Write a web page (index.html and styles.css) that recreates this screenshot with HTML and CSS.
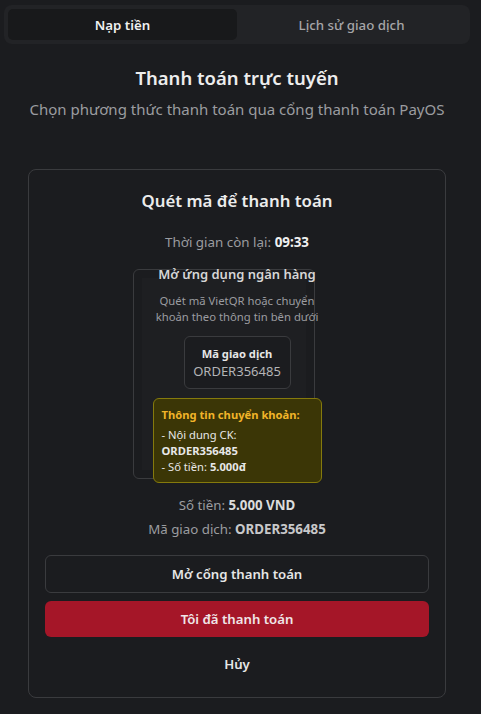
FILE: index.html
```html
<!DOCTYPE html>
<html lang="vi">
<head>
<meta charset="utf-8">
<link rel="stylesheet" href="styles.css">
</head>
<body>
<div class="page">
  <div class="tabs">
    <div class="tab active">Nạp tiền</div>
    <div class="tab">Lịch sử giao dịch</div>
  </div>
  <h1 class="title">Thanh toán trực tuyến</h1>
  <p class="subtitle">Chọn phương thức thanh toán qua cổng thanh toán PayOS</p>

  <div class="card">
    <h2 class="card-title">Quét mã để thanh toán</h2>
    <p class="timer">Thời gian còn lại: <b>09:33</b></p>
    <div class="qr-box">
      <div class="qr-inner">
        <div class="qr-head">Mở ứng dụng ngân hàng</div>
        <p class="qr-desc">Quét mã VietQR hoặc chuyển khoản theo thông tin bên dưới</p>
        <div class="code-box">
          <div class="code-label">Mã giao dịch</div>
          <div class="code-value">ORDER356485</div>
        </div>
        <div class="info-box">
          <div class="info-title">Thông tin chuyển khoản:</div>
          <div>- Nội dung CK:</div>
          <div><b>ORDER356485</b></div>
          <div>- Số tiền: <b>5.000đ</b></div>
        </div>
      </div>
    </div>
    <p class="line amount">Số tiền: <b>5.000 VND</b></p>
    <p class="line">Mã giao dịch: <b>ORDER356485</b></p>
    <div class="actions">
      <button class="btn btn-outline">Mở cổng thanh toán</button>
      <button class="btn btn-red">Tôi đã thanh toán</button>
      <button class="btn btn-ghost">Hủy</button>
    </div>
  </div>
</div>
</body>
</html>
```

FILE: styles.css
```css
* { box-sizing: border-box; }
html, body { margin: 0; padding: 0; }
body {
  background: #1b1c1f;
  color: #e6e6e6;
  font-family: "Noto Sans", "Open Sans", sans-serif;
  width: 481px;
  height: 714px;
  overflow: hidden;
}
.page { padding: 5px 11px 0 4px; }
.tabs {
  display: grid;
  grid-template-columns: 1fr 1fr;
  background: #222326;
  border-radius: 8px;
  padding: 4px;
  height: 39px;
}
.tab {
  display: flex;
  align-items: center;
  justify-content: center;
  font-size: 13.3px;
  color: #a6a6a8;
  font-weight: 500;
  border-radius: 5px;
}
.tab.active { background: #18191b; color: #f0f0f0; font-weight: 600; }
.title {
  margin: 20px 0 0;
  text-align: center;
  font-size: 18.5px;
  font-weight: 600;
  color: #ededed;
  line-height: 28px;
}
.subtitle {
  margin: 6px 0 0;
  text-align: center;
  font-size: 15px;
  color: #9b9ca0;
  line-height: 22px;
}
.card {
  margin: 49px 24px 0 24px;
  border: 1px solid #3a3b3e;
  border-radius: 8px;
  padding: 18px 16px 14px;
  display: flex;
  flex-direction: column;
  align-items: center;
  height: 529px;
}
.card-title {
  margin: 0;
  font-size: 16.8px;
  font-weight: 600;
  line-height: 26px;
  color: #ececec;
}
.timer {
  margin: 18px 0 0;
  font-size: 13.4px;
  line-height: 20px;
  color: #9b9ca0;
}
.timer b { color: #f0f0f0; font-weight: 700; }
.qr-box {
  margin-top: 17px;
  margin-right: 26px;
  width: 182px;
  height: 210px;
  border: 1px solid #3a3b3e;
  border-radius: 6px;
  padding: 8px;
}
.qr-inner {
  height: 100%;
  background: #1e1f22;
  padding-left: 26px;
  display: flex;
  flex-direction: column;
  align-items: center;
}
.qr-head {
  margin-top: -14px;
  font-size: 13px;
  font-weight: 600;
  color: #d6d6d6;
  line-height: 20px;
  white-space: nowrap;
}
.qr-desc {
  margin: 9px 0 0;
  text-align: center;
  font-size: 11.3px;
  line-height: 16px;
  color: #9b9ca0;
  width: 180px;
  flex-shrink: 0;
}
.code-box {
  margin-top: 11px;
  border: 1px solid #3a3b3e;
  border-radius: 6px;
  padding: 8px 4px 7px;
  text-align: center;
  width: 107px;
  flex-shrink: 0;
  background: #1b1c1f;
}
.code-label { font-size: 11.2px; font-weight: 700; color: #e6e6e6; line-height: 17px; }
.code-value { font-size: 13px; color: #b4b4b6; line-height: 19px; }
.info-box {
  margin-top: 9px;
  width: 169px;
  flex-shrink: 0;
  background: #3b3606;
  border: 1px solid #857a0c;
  border-radius: 6px;
  padding: 8px 8px 7px;
  font-size: 11.2px;
  line-height: 16px;
  color: #e8e8e8;
}
.info-title { color: #f0b429; font-weight: 700; margin-bottom: 4px; }
.info-box b { font-weight: 700; }
.line {
  margin: 0;
  font-size: 13.3px;
  line-height: 20px;
  color: #9b9ca0;
}
.line b { color: #c8c8ca; font-weight: 700; }
.amount { margin-top: 16px; }
.line + .line { margin-top: 4px; }
.line.amount b { color: #dcdcdc; }
.actions {
  width: 100%;
  margin-top: 16px;
  display: flex;
  flex-direction: column;
  gap: 8px;
}
.btn {
  font-family: inherit;
  font-size: 13.2px;
  font-weight: 600;
  height: 38px;
  border-radius: 6px;
  border: 1px solid transparent;
  cursor: pointer;
}
.btn-outline { background: transparent; border-color: #3a3b3e; color: #e6e6e6; }
.btn-red { background: #a51628; color: #f0e6e8; height: 36px; }
.btn-ghost { background: transparent; color: #e6e6e6; height: 37px; }
```
